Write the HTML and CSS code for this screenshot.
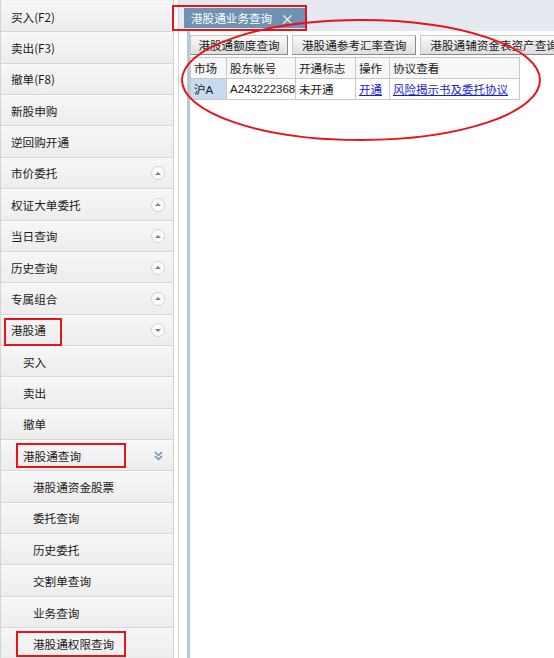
FILE: index.html
```html
<!DOCTYPE html>
<html lang="zh">
<head>
    <meta charset="UTF-8">
    <title>港股通业务查询</title>
    <link rel="stylesheet" href="styles.css">
</head>
<body>
    <div class="sidebar">
        <div class="menu-item">买入(F2)</div>
        <div class="menu-item">卖出(F3)</div>
        <div class="menu-item">撤单(F8)</div>
        <div class="menu-item">新股申购</div>
        <div class="menu-item">逆回购开通</div>
        <div class="menu-item">市价委托<span class="circle up"></span></div>
        <div class="menu-item">权证大单委托<span class="circle up"></span></div>
        <div class="menu-item">当日查询<span class="circle up"></span></div>
        <div class="menu-item">历史查询<span class="circle up"></span></div>
        <div class="menu-item">专属组合<span class="circle up"></span></div>
        <div class="menu-item">港股通<span class="circle down"></span></div>
        <div class="menu-item level2">买入</div>
        <div class="menu-item level2">卖出</div>
        <div class="menu-item level2">撤单</div>
        <div class="menu-item level2">港股通查询
            <svg class="chevron" width="9" height="10" viewBox="0 0 9 10"><path d="M1 1l3.5 3.5L8 1M1 5l3.5 3.5L8 5" fill="none" stroke="#6d8fb3" stroke-width="1.5"/></svg>
        </div>
        <div class="menu-item level3">港股通资金股票</div>
        <div class="menu-item level3">委托查询</div>
        <div class="menu-item level3">历史委托</div>
        <div class="menu-item level3">交割单查询</div>
        <div class="menu-item level3">业务查询</div>
        <div class="menu-item level3">港股通权限查询</div>
    </div>

    <div class="main">
        <div class="tab-bar">
            <div class="tab">港股通业务查询<span class="close">×</span></div>
        </div>
        <div class="panel">
            <div class="sub-tabs">
                <div class="sub-tab">港股通额度查询</div>
                <div class="sub-tab">港股通参考汇率查询</div>
                <div class="sub-tab">港股通辅资金表资产查询</div>
            </div>
            <table class="grid">
                <colgroup>
                    <col class="c1"><col class="c2"><col class="c3"><col class="c4"><col class="c5">
                </colgroup>
                <tr>
                    <th>市场</th>
                    <th>股东帐号</th>
                    <th>开通标志</th>
                    <th>操作</th>
                    <th>协议查看</th>
                </tr>
                <tr>
                    <td class="selected">沪A</td>
                    <td>A243222368</td>
                    <td>未开通</td>
                    <td><a href="#">开通</a></td>
                    <td><a href="#">风险揭示书及委托协议</a></td>
                </tr>
            </table>
        </div>
    </div>

    <!-- 标注 -->
    <svg class="marks" width="554" height="658">
        <g fill="none" stroke="#e8131b" stroke-width="2">
            <rect x="173" y="6" width="133" height="24"/>
            <rect x="5" y="319" width="56" height="26"/>
            <rect x="17" y="444" width="108" height="23"/>
            <rect x="17" y="632" width="108" height="24"/>
            <ellipse cx="361" cy="80" rx="179" ry="60"/>
        </g>
    </svg>
</body>
</html>
```

FILE: styles.css
```css
body {
    margin: 0;
    width: 554px;
    height: 658px;
    overflow: hidden;
    display: flex;
    font-family: "Noto Sans CJK SC", "DejaVu Sans", sans-serif;
    font-size: 12px;
    color: #1a1a1a;
    background: #fff;
    position: relative;
}
.sidebar {
    width: 172px;
    flex-shrink: 0;
    border-left: 1px solid #d4d4d4;
    border-right: 1px solid #d0d0d0;
    padding-top: 1px;
    background: #efefef;
}
.menu-item {
    height: 31.37px;
    box-sizing: border-box;
    display: flex;
    align-items: center;
    padding-left: 10px;
    border-top: 1px solid #fbfbfb;
    border-bottom: 1px solid #d6d6d6;
    background: linear-gradient(#f6f6f6, #ededed);
    font-size: 11.6px;
}
.level2 {
    padding-left: 22px;
}
.level3 {
    padding-left: 32px;
}
.circle {
    margin-left: auto;
    margin-right: 8px;
    width: 12px;
    height: 12px;
    border: 1px solid #d3d3d3;
    border-radius: 50%;
    background: #fcfcfc;
    display: flex;
    align-items: center;
    justify-content: center;
}
.circle::after {
    content: "";
    border-left: 3px solid transparent;
    border-right: 3px solid transparent;
}
.circle.up::after {
    border-bottom: 3px solid #5a86b6;
}
.circle.down::after {
    border-top: 3px solid #5a86b6;
}
.chevron {
    margin-left: auto;
    margin-right: 10px;
}
.main {
    flex: 1;
    margin-left: 4px;
    border-left: 1px solid #d6d6d6;
    display: flex;
    flex-direction: column;
}
.tab-bar {
    height: 31px;
    box-sizing: border-box;
    background: #e4eaef;
    padding: 8px 0 0 5px;
}
.tab {
    display: inline-flex;
    align-items: center;
    height: 20px;
    padding: 0 11px 0 7px;
    background: #6d92b4;
    color: #fff;
    font-size: 11.6px;
}
.close {
    margin-left: 8px;
    font-size: 14px;
}
.panel {
    flex: 1;
    margin-left: 8px;
    border-left: 3px solid #b5c9db;
    padding-top: 4px;
}
.sub-tabs {
    display: flex;
    gap: 4px;
    white-space: nowrap;
    overflow: hidden;
}
.sub-tab {
    height: 20px;
    box-sizing: border-box;
    padding: 0 9px;
    display: flex;
    align-items: center;
    border: 1px solid #8a8a8a;
    border-top-color: #c8c8c8;
    border-left-color: #c8c8c8;
    background: linear-gradient(#fafafa, #dedede);
    font-size: 11.6px;
    flex-shrink: 0;
}
.sub-tab:first-child {
    width: 98px;
    justify-content: center;
}
.grid {
    border-collapse: collapse;
    table-layout: fixed;
    width: 329px;
    margin-top: 2px;
    font-size: 11.6px;
}
.grid th, .grid td {
    border: 1px solid #c9c9c9;
    height: 20px;
    padding: 0 3px;
    text-align: left;
    font-weight: normal;
    white-space: nowrap;
    overflow: hidden;
}
.grid th {
    background: #f7f7f7;
}
.grid td {
    font-family: "Liberation Sans", "Noto Sans CJK SC", sans-serif;
    font-size: 11.5px;
}
.grid .c1 { width: 36px; }
.grid .c2 { width: 69px; }
.grid .c3 { width: 60px; }
.grid .c4 { width: 34px; }
.grid .c5 { width: 130px; }
.selected {
    background: #c8daf0;
}
.grid a {
    color: #1a1ad0;
}
.marks {
    position: absolute;
    left: 0;
    top: 0;
    pointer-events: none;
}
```
